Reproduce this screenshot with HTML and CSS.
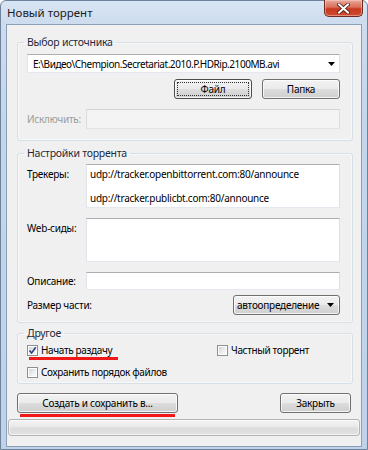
FILE: index.html
```html
<!DOCTYPE html>
<html lang="ru">
<head>
<meta charset="utf-8">
<title>Новый торрент</title>
<link rel="stylesheet" href="styles.css">
</head>
<body>
<div class="window">
  <div class="titlebar">
    <span class="title">Новый торрент</span>
    <div class="close">
      <svg width="13" height="11" viewBox="0 0 13 11"><path d="M2 1.5 L11 9.5 M11 1.5 L2 9.5" stroke="#4a1a14" stroke-width="3.6" stroke-linecap="square"/><path d="M2 1.5 L11 9.5 M11 1.5 L2 9.5" stroke="#ffffff" stroke-width="2" stroke-linecap="square"/></svg>
    </div>
  </div>
  <div class="client">
    <fieldset class="group g1">
      <legend>Выбор источника</legend>
      <div class="combo edit"><span class="path">E:\Видео\Chempion.Secretariat.2010.P.HDRip.2100MB.avi</span><svg class="arrow" width="7" height="4" viewBox="0 0 7 4"><path d="M0 0 H7 L3.5 4 Z" fill="#000"/></svg></div>
      <div class="btnrow">
        <button class="btn default">Файл</button>
        <button class="btn">Папка</button>
      </div>
      <div class="row disabled">
        <span class="lbl">Исключить:</span>
        <div class="input dis"></div>
      </div>
    </fieldset>
    <fieldset class="group g2">
      <legend>Настройки торрента</legend>
      <div class="field">
        <span class="lbl top">Трекеры:</span>
        <div class="area">
          <div class="line gap">udp://tracker.openbittorrent.com:80/announce</div>
          <div class="line">udp://tracker.publicbt.com:80/announce</div>
        </div>
      </div>
      <div class="field sp">
        <span class="lbl top">Web-сиды:</span>
        <div class="area"></div>
      </div>
      <div class="field sp mid">
        <span class="lbl">Описание:</span>
        <div class="input desc"></div>
      </div>
      <div class="field sz mid between">
        <span class="lbl">Размер части:</span>
        <div class="combo drop"><span>автоопределение</span><svg class="arrow" width="7" height="4" viewBox="0 0 7 4"><path d="M0 0 H7 L3.5 4 Z" fill="#000"/></svg></div>
      </div>
    </fieldset>
    <fieldset class="group g3">
      <legend>Другое</legend>
      <div class="checks">
        <div class="cell">
          <div class="check"><span class="cb"><svg width="9" height="9" viewBox="0 0 9 9"><path d="M1.5 4.5 L3.6 7 L7.8 1.2" fill="none" stroke="#2c3f83" stroke-width="1.6"/></svg></span><span>Начать раздачу</span></div>
          <div class="mark m1"></div>
        </div>
        <div class="cell">
          <div class="check"><span class="cb"></span><span>Частный торрент</span></div>
        </div>
        <div class="cell">
          <div class="check"><span class="cb"></span><span>Сохранить порядок файлов</span></div>
        </div>
      </div>
    </fieldset>
    <div class="actions">
      <div class="col">
        <button class="btn wide">Создать и сохранить в...</button>
        <div class="mark m2"></div>
      </div>
      <button class="btn closebtn">Закрыть</button>
    </div>
    <div class="progress"></div>
  </div>
</div>
</body>
</html>
```
FILE: styles.css
```css
* { box-sizing: border-box; }
html, body { margin: 0; padding: 0; }
body {
  width: 368px;
  height: 450px;
  overflow: hidden;
  font-family: "Noto Sans", "Open Sans", sans-serif;
  font-size: 10px;
  letter-spacing: -0.25px;
  color: #000;
  background: #ffffff;
}
.window {
  width: 368px;
  height: 450px;
  display: flex;
  flex-direction: column;
  background: linear-gradient(to bottom, #d8e5f3 0px, #cddcee 22px, #c3d6ec 120px, #bed2ea 450px);
  border: 1px solid #6f829b;
  border-radius: 6px 6px 0 0;
  padding: 0 5px 2px 5px;
}
.titlebar {
  height: 23px;
  flex: none;
  display: flex;
  justify-content: space-between;
  align-items: flex-start;
}
.title {
  margin: 5px 0 0 1px;
  font-size: 11.5px;
  letter-spacing: 0;
  line-height: 14px;
  color: #1b1b1b;
}
.close {
  width: 39px;
  height: 17px;
  margin: -1px -1px 0 0;
  border: 1px solid #6d2b22;
  border-top: none;
  border-radius: 0 0 5px 5px;
  background: linear-gradient(to bottom, #e9a99b 0%, #da6e58 45%, #c7391f 55%, #cf4d2e 100%);
  box-shadow: inset 0 0 0 1px rgba(255, 220, 210, 0.45);
  display: flex;
  align-items: center;
  justify-content: center;
}
.client {
  flex: 1;
  background: #f0f0f0;
  border: 1px solid #8d9fb4;
  display: flex;
  flex-direction: column;
}
.group {
  border: 1px solid #d5dfe5;
  border-radius: 3px;
  margin: 0 8px 0 10px;
  padding: 4px 12px 11px 9px;
  min-width: 0;
  box-shadow: inset 0 0 0 1px #f8f8f8;
}
.group legend {
  padding: 0 3px;
  margin-left: -3px;
  height: 16px;
  line-height: 16px;
  font-size: 10.5px;
  color: #1e2a3b;
}
.g1 { margin-top: 9px; }
.g2 { margin-top: 4px; padding: 3px 12px 7px 9px; }
.g3 { margin-top: 2px; padding: 3px 12px 4px 9px; }

.combo.edit {
  height: 19px;
  background: #fff;
  border: 1px solid;
  border-color: #abadb3 #dbdfe6 #e3e9ef #e2e3ea;
  display: flex;
  align-items: center;
  justify-content: space-between;
  padding: 0 4px 0 5px;
  white-space: nowrap;
}
.path { letter-spacing: -0.45px; }
.arrow { flex: none; }
.btnrow {
  display: flex;
  justify-content: flex-end;
  gap: 10px;
  margin-top: 6px;
}
.btn {
  height: 20px;
  width: 78px;
  padding: 0;
  border: 1px solid #707070;
  border-radius: 3px;
  background: linear-gradient(to bottom, #f2f2f2 0%, #ebebeb 48%, #dddddd 52%, #cfcfcf 100%);
  box-shadow: inset 0 0 0 1px rgba(255, 255, 255, 0.75);
  font: inherit;
  letter-spacing: inherit;
  color: #000;
  line-height: 16px;
}
.btn.default {
  border-color: #4d4d4d;
  outline: 1px dotted #333;
  outline-offset: -4px;
}
.row {
  display: flex;
  align-items: center;
  margin-top: 10px;
}
.lbl {
  width: 59px;
  flex: none;
  white-space: nowrap;
  line-height: 14px;
}
.lbl.top { padding-top: 3px; }
.disabled .lbl { color: #9c9c9c; }
.input {
  flex: 1;
  background: #fff;
  border: 1px solid;
  border-color: #abadb3 #dbdfe6 #e3e9ef #e2e3ea;
}
.input.dis {
  height: 20px;
  background: #f4f4f4;
  border-color: #d3d3d3 #dcdcdc #e3e3e3 #dcdcdc;
}
.input.desc { height: 18px; }
.field {
  display: flex;
  align-items: flex-start;
}
.field.mid { align-items: center; }
.field.between { justify-content: space-between; }
.field.sp { margin-top: 10px; }
.field.sz { margin-top: 5px; }
.area {
  flex: 1;
  height: 44px;
  background: #fff;
  border: 1px solid;
  border-color: #abadb3 #dbdfe6 #e3e9ef #e2e3ea;
  padding: 3px 3px;
  line-height: 12px;
  white-space: nowrap;
  overflow: hidden;
}
.line.gap { margin-bottom: 12px; }
.combo.drop {
  width: 107px;
  height: 20px;
  border: 1px solid #707070;
  border-radius: 3px;
  background: linear-gradient(to bottom, #f2f2f2 0%, #ebebeb 48%, #dddddd 52%, #cfcfcf 100%);
  box-shadow: inset 0 0 0 1px rgba(255, 255, 255, 0.75);
  display: flex;
  align-items: center;
  justify-content: space-between;
  padding: 0 5px 0 3px;
  white-space: nowrap;
}
.checks {
  display: grid;
  grid-template-columns: 190px 1fr;
  row-gap: 6px;
  align-items: start;
}
.check {
  display: flex;
  align-items: center;
  gap: 3px;
  height: 13px;
  line-height: 13px;
  white-space: nowrap;
  letter-spacing: -0.35px;
}
.cb {
  width: 11px;
  height: 11px;
  flex: none;
  border: 1px solid #8e8f8f;
  background: linear-gradient(135deg, #cdd1d7 0%, #eef0f2 60%, #fbfbfb 100%);
  box-shadow: inset 0 0 0 1px #ffffff;
  display: flex;
  align-items: center;
  justify-content: center;
}
.mark {
  height: 3px;
  background: #f01818;
}
.m1 { width: 89px; margin-left: 2px; }
.actions {
  display: flex;
  justify-content: space-between;
  align-items: flex-start;
  margin: 9px 10px 0 10px;
}
.btn.wide { width: 161px; }
.btn.closebtn { width: 71px; }
.m2 { width: 155px; margin: 1px 0 0 3px; }
.progress {
  height: 17px;
  margin: 2px 1px 0 1px;
  border: 1px solid #b4b4b4;
  border-radius: 3px;
  background: linear-gradient(to bottom, #f3f3f3 0%, #e9e9e9 45%, #dcdcdc 55%, #e2e2e2 100%);
  box-shadow: inset 0 0 0 1px rgba(255, 255, 255, 0.6);
}
```
